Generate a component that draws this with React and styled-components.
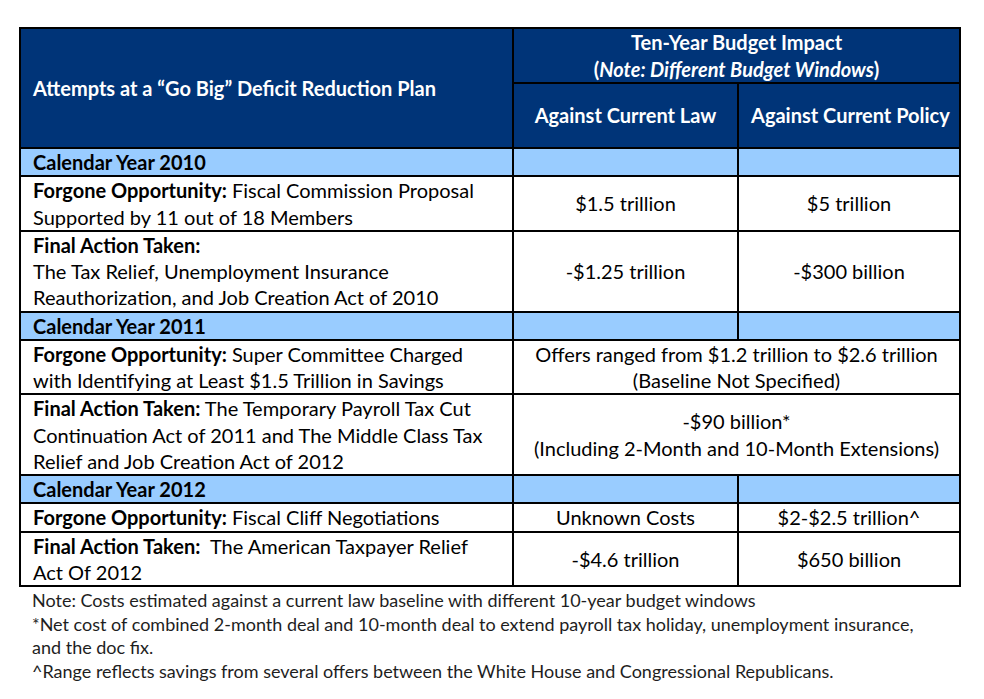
import React from 'react';
import styled, { createGlobalStyle } from 'styled-components';

const GlobalStyle = createGlobalStyle`
    body {
        margin: 0;
        background: #ffffff;
        font-family: Lato, "Liberation Sans", sans-serif;
        color: #000;
    }
`;

const Page = styled.div`
    padding: 27px 0 0 19px;
    width: 940px;
`;

const Table = styled.table`
    border-collapse: collapse;
    width: 940px;
    table-layout: fixed;
    border: 2px solid #000;
    font-size: 20px;
    line-height: 26.25px;
`;

const HeadCell = styled.th`
    background: #003478;
    color: #ffffff;
    font-weight: 700;
    border: 2px solid #000;
    padding: 0 12px;
    text-align: ${(p) => (p.$left ? 'left' : 'center')};
    vertical-align: middle;
    white-space: nowrap;
    height: ${(p) => p.$h || 'auto'};
`;

const Cell = styled.td`
    border: 2px solid #000;
    padding: 0 12px;
    text-align: ${(p) => (p.$center ? 'center' : 'left')};
    vertical-align: middle;
    white-space: nowrap;
    background: ${(p) => (p.$band ? '#99ccff' : '#ffffff')};
    font-weight: ${(p) => (p.$band ? 700 : 400)};
`;

const Label = styled.b`
    font-weight: 700;
`;

const Note = styled.em`
    font-style: italic;
    font-weight: 700;
`;

const Footnotes = styled.div`
    margin-top: 2px;
    padding-left: 13px;
    font-size: 18px;
    line-height: 23.7px;
    color: #1e1e1e;
    white-space: nowrap;
`;

const years = [
    {
        year: 'Calendar Year 2010',
        rows: [
            {
                label: 'Forgone Opportunity:',
                text: [' Fiscal Commission Proposal', 'Supported by 11 out of 18 Members'],
                law: '$1.5 trillion',
                policy: '$5 trillion',
            },
            {
                label: 'Final Action Taken:',
                text: ['', 'The Tax Relief, Unemployment Insurance', 'Reauthorization, and Job Creation Act of 2010'],
                law: '-$1.25 trillion',
                policy: '-$300 billion',
            },
        ],
    },
    {
        year: 'Calendar Year 2011',
        rows: [
            {
                label: 'Forgone Opportunity:',
                text: [' Super Committee Charged', 'with Identifying at Least $1.5 Trillion in Savings'],
                both: ['Offers ranged from $1.2 trillion to $2.6 trillion', '(Baseline Not Specified)'],
            },
            {
                label: 'Final Action Taken:',
                text: [' The Temporary Payroll Tax Cut', 'Continuation Act of 2011 and The Middle Class Tax', 'Relief and Job Creation Act of 2012'],
                both: ['-$90 billion*', '(Including 2-Month and 10-Month Extensions)'],
            },
        ],
    },
    {
        year: 'Calendar Year 2012',
        rows: [
            {
                label: 'Forgone Opportunity:',
                text: [' Fiscal Cliff Negotiations'],
                law: 'Unknown Costs',
                policy: '$2-$2.5 trillion^',
            },
            {
                label: 'Final Action Taken:',
                text: ['\u00a0 The American Taxpayer Relief', 'Act Of 2012'],
                law: '-$4.6 trillion',
                policy: '$650 billion',
            },
        ],
    },
];

function Lines({ lines }) {
    return lines.map((l, i) => (
        <React.Fragment key={i}>
            {i > 0 && <br />}
            {l}
        </React.Fragment>
    ));
}

export default function App() {
    return (
        <Page>
            <GlobalStyle />
            <Table>
                <colgroup>
                    <col style={{ width: 493 }} />
                    <col style={{ width: 225 }} />
                    <col style={{ width: 222 }} />
                </colgroup>
                <thead>
                    <tr>
                        <HeadCell rowSpan={2} $left>
                            Attempts at a “Go Big” Deficit Reduction Plan
                        </HeadCell>
                        <HeadCell colSpan={2} $h="53px">
                            Ten-Year Budget Impact
                            <br />
                            (<Note>Note: Different Budget Windows</Note>)
                        </HeadCell>
                    </tr>
                    <tr>
                        <HeadCell $h="63px">Against Current Law</HeadCell>
                        <HeadCell $h="63px">Against Current Policy</HeadCell>
                    </tr>
                </thead>
                <tbody>
                    {years.map((y) => (
                        <React.Fragment key={y.year}>
                            <tr>
                                <Cell $band>{y.year}</Cell>
                                <Cell $band />
                                <Cell $band />
                            </tr>
                            {y.rows.map((r, i) => (
                                <tr key={i}>
                                    <Cell>
                                        <Label>{r.label}</Label>
                                        <Lines lines={r.text} />
                                    </Cell>
                                    {r.both ? (
                                        <Cell $center colSpan={2}>
                                            <Lines lines={r.both} />
                                        </Cell>
                                    ) : (
                                        <>
                                            <Cell $center>{r.law}</Cell>
                                            <Cell $center>{r.policy}</Cell>
                                        </>
                                    )}
                                </tr>
                            ))}
                        </React.Fragment>
                    ))}
                </tbody>
            </Table>
            <Footnotes>
                Note: Costs estimated against a current law baseline with different 10-year budget windows
                <br />
                *Net cost of combined 2-month deal and 10-month deal to extend payroll tax holiday, unemployment insurance,
                <br />
                and the doc fix.
                <br />
                ^Range reflects savings from several offers between the White House and Congressional Republicans.
            </Footnotes>
        </Page>
    );
}
